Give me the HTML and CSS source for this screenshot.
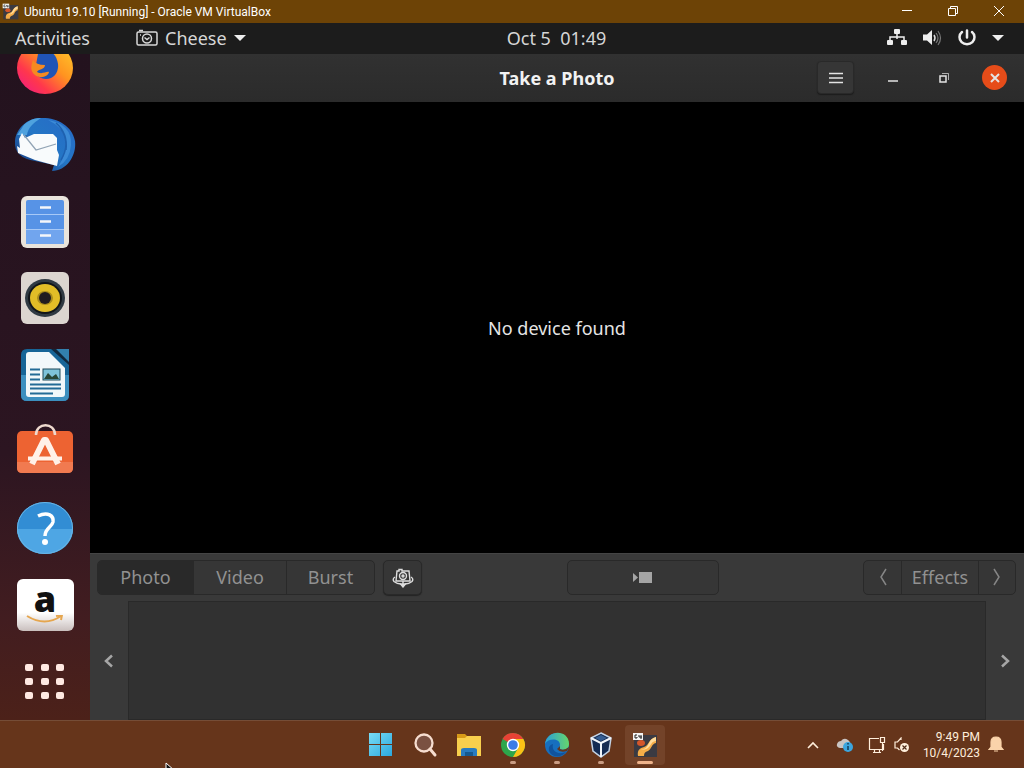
FILE: index.html
```html
<!DOCTYPE html>
<html lang="en">
<head>
<meta charset="utf-8">
<meta name="viewport" content="width=device-width, initial-scale=1">
<title>Ubuntu 19.10 [Running] - Oracle VM VirtualBox</title>
<link rel="stylesheet" href="styles.css">
</head>
<body>
<svg class="defs" aria-hidden="true">
  <defs>
    <symbol id="vm" viewBox="0 0 26 26">
      <rect x="2" y="3" width="23" height="22" fill="#3a3a42"/>
      <path d="M6 24c-1-6 2-8 6-9 5-1 4-8 12-10v6c-5 1-4 6-8 8-3 1-4 2-4 5z" fill="#f5ad48"/>
      <path d="M8 17c5 1 7-2 9-6 2-4 4-5 7-6v4c-4 0-5 4-7 6-3 3-6 3-9 2z" fill="#ffdc9c"/>
      <ellipse cx="9" cy="11" rx="4" ry="3" fill="#d4562a"/>
      <rect x="1" y="1" width="10" height="7" fill="#f4f4f4"/>
      <path d="M5 3H3v3h2V5M7 3v2h3M9 3v4" fill="none" stroke="#222"/>
    </symbol>
  </defs>
</svg>

<div class="desktop">
  <header class="titlebar">
    <svg class="titlebar-icon" viewBox="0 0 26 26" aria-hidden="true"><use href="#vm"/></svg>
    <h1>Ubuntu 19.10 [Running] - Oracle VM VirtualBox</h1>
    <button aria-label="Minimize"><svg width="12" height="12" viewBox="0 0 12 12"><path d="M1 5.500h10"/></svg></button>
    <button aria-label="Restore"><svg width="12" height="12" viewBox="0 0 12 12"><path d="M1.500 3.500h7v7h-7zM3.500 3.500v-2h7v7h-2"/></svg></button>
    <button aria-label="Close"><svg width="12" height="12" viewBox="0 0 12 12"><path d="M1 1l10 10M11 1L1 11"/></svg></button>
  </header>

  <nav class="panel" aria-label="System panel">
    <div class="panel-left">
      <button>Activities</button>
      <button class="app-menu">
        <svg width="22" height="18" viewBox="0 0 22 18" fill="none" stroke="#d8d8d8" stroke-width="1.500"><rect x="1" y="3" width="20" height="13" rx="1.500"/><circle cx="11" cy="9.500" r="4.500"/><path d="M8.500 8.500l2.500 2 2.500-2M3 1.500h4M4 6h1"/></svg>
        <span>Cheese</span>
        <svg width="12" height="7" viewBox="0 0 12 7" fill="#eee"><path d="M0 0h12L6 6z"/></svg>
      </button>
    </div>
    <button class="clock">Oct 5&nbsp; 01:49</button>
    <button class="status" aria-label="System status">
      <svg width="20" height="18" viewBox="0 0 20 18" fill="#eee"><rect x="7" y="0" width="6" height="5" rx="1"/><rect x="0" y="11" width="6" height="5" rx="1"/><rect x="14" y="11" width="6" height="5" rx="1"/><path d="M10 5v3M3 12V8h14v4M10 8v2" fill="none" stroke="#eee" stroke-width="1.500"/></svg>
      <svg width="20" height="18" viewBox="0 0 20 18"><path d="M1 5.500h4L10 1v15l-5-4.500H1z" fill="#eee"/><path d="M12 6q2 3 0 6" fill="none" stroke="#ddd" stroke-width="1.500"/><path d="M14 4q4 5 0 10M16 2q5 7 0 14" fill="none" stroke="#777" stroke-width="1.200"/></svg>
      <svg width="20" height="18" viewBox="0 0 20 18" fill="none" stroke="#eee" stroke-width="2.500" stroke-linecap="round"><path d="M5 3a7.500 7 0 1 0 10 0M10 1.500v7"/></svg>
      <svg width="12" height="7" viewBox="0 0 12 7" fill="#eee"><path d="M0 0h12L6 6z"/></svg>
    </button>
  </nav>

  <main class="workspace">
    <nav class="dock" aria-label="Dock">
      <ul>
        <li><a href="#firefox" aria-label="Firefox"><svg viewBox="0 0 64 64">
          <defs><linearGradient id="ff" x1="0" y1="1" x2="1" y2="0"><stop offset="0" stop-color="#ef168f"/><stop offset=".3" stop-color="#ff374c"/><stop offset=".6" stop-color="#ff9420"/><stop offset="1" stop-color="#ffd02d"/></linearGradient></defs>
          <ellipse cx="32" cy="32" rx="28" ry="26" fill="url(#ff)"/>
          <path d="M25 18q17-8 20 10c1 8-4 15-12 15-6 0-10-4-11-9z" fill="#2054b5"/>
          <path d="M20 24q3 5 12 5c0 5-7 4-8 7 5 3 9-1 12 0-1 5-9 7-14 3-5-4-4-9-2-15z" fill="#f58a21"/></svg></a></li>
        <li><a href="#thunderbird" aria-label="Thunderbird"><svg viewBox="0 0 64 64">
          <defs><linearGradient id="tb" x1="0" y1="1" x2="1" y2="0"><stop offset="0" stop-color="#163375"/><stop offset=".5" stop-color="#2476c5"/><stop offset="1" stop-color="#276ac7"/></linearGradient></defs>
          <path d="M2 28C3 15 15 5 27 5c16-1 32 7 35 23 2 15-9 30-23 30l2-6-19-4C9 46 1 40 2 28z" fill="url(#tb)"/>
          <path d="M4 22l5-7c2-5 10-10 19-10-8 5-13 10-14 17z" fill="#4fa2de"/>
          <path d="M35 7q24 4 23 25-1 15-13 22 9-14 8-27-3-13-18-20z" fill="#3b8ad6"/>
          <path d="M43 10q12 10 10 27M48 16q10 14 0 31" fill="none" stroke="#1e61b0" stroke-width="1.500"/>
          <path d="M9 20l3 5 9-4 19 0 4 4v12l2 5-2 11-22-6-17-7-1-7 3 2-1-9z" fill="#f8fbfc"/>
          <path d="M11 22l12 15 20-6" fill="none" stroke="#91a4b5" stroke-width="1.300"/></svg></a></li>
        <li><a href="#files" aria-label="Files"><svg viewBox="0 0 64 64">
          <rect x="8" y="6" width="48" height="52" rx="6" fill="#e9e4dc"/><rect x="13" y="10" width="38" height="44" rx="2" fill="#5793e6"/><path d="M13 40h38v14H13z" fill="#71a5ee"/><path d="M13 24.500h38M13 39.500h38" stroke="#a7c9f7"/><path d="M27 17.500h11M27 31.500h11M27 45.500h11" stroke="#f4f6fa" stroke-width="2.500"/></svg></a></li>
        <li><a href="#rhythmbox" aria-label="Rhythmbox"><svg viewBox="0 0 64 64">
          <rect x="8" y="6" width="48" height="52" rx="6" fill="#dcd5d0"/><ellipse cx="32" cy="32" rx="20" ry="19" fill="#303a43"/><ellipse cx="32" cy="32" rx="17" ry="16" fill="#11151a"/><ellipse cx="32" cy="32" rx="15" ry="14" fill="#e2bd27"/><ellipse cx="32" cy="32" rx="8" ry="7" fill="#a88b1c"/><ellipse cx="32" cy="32" rx="6" ry="6" fill="#211c20"/></svg></a></li>
        <li><a href="#writer" aria-label="LibreOffice Writer"><svg viewBox="0 0 64 64">
          <path d="M14 6h42v46q0 6-6 6H14q-6 0-6-6V12q0-6 6-6z" fill="#176597"/><path d="M8 32h48v20q0 6-6 6H14q-6 0-6-6z" fill="#3c8fbf"/><path d="M16 9h20l16 16v26q0 3-3 3H16q-3 0-3-3V12q0-3 3-3z" fill="#f2f8fa"/><path d="M43 6h13v14z" fill="#3280ae"/><path d="M38 6l18 16v-3L43 6z" fill="#10283d"/>
          <path d="M17 26.500h10M17 31.500h10M17 36.500h10M17 41.500h31M17 45.500h31M17 50.500h23" stroke="#236b96" stroke-width="2"/><rect x="30" y="26" width="17" height="11" fill="#7ec3da" stroke="#1d4859"/><path d="M31 36l4-6 4 4 4-3 3 5z" fill="#294737"/></svg></a></li>
        <li><a href="#software" aria-label="Ubuntu Software"><svg viewBox="0 0 64 64">
          <rect x="4" y="11" width="56" height="42" rx="5" fill="#ed6332"/><path d="M4 42h56v6q0 5-5 5H9q-5 0-5-5z" fill="#f17a50"/><path d="M23 15c0-13 19-13 19 0" fill="none" stroke="#eed9ce" stroke-width="2.500"/><path d="M19 44l12-24h2l12 24" fill="none" stroke="#fff1e8" stroke-width="6" stroke-linejoin="round"/><path d="M15 38.500h34" stroke="#fff1e8" stroke-width="4"/></svg></a></li>
        <li><a href="#help" aria-label="Help"><svg viewBox="0 0 64 64">
          <ellipse cx="32" cy="32" rx="28" ry="26" fill="#328dd4"/><path d="M4 33h56c0 13-11 25-28 25S4 46 4 33z" fill="#4ea6e4"/><ellipse cx="32" cy="32" rx="27.500" ry="25.500" fill="none" stroke="#69b5e5"/><path d="M25 20c10-5 16 0 15 6-1 5-8 6-8 14" fill="none" stroke="#fff" stroke-width="3.500"/><circle cx="32" cy="46" r="3" fill="#fff"/></svg></a></li>
        <li><a class="amazon" href="#amazon" aria-label="Amazon"><span>a</span><svg class="smile" viewBox="0 0 38 10"><path d="M1 1q18 11 34 0M30 1l6-1-1 5" fill="none" stroke="#e5a64f" stroke-width="2"/></svg></a></li>
        <li><button aria-label="Show applications"><svg viewBox="0 0 64 64" fill="#ffe9e2"><rect x="12" y="14" width="8" height="7" rx="2"/><rect x="28" y="14" width="8" height="7" rx="2"/><rect x="43" y="14" width="8" height="7" rx="2"/><rect x="12" y="28" width="8" height="7" rx="2"/><rect x="28" y="28" width="8" height="7" rx="2"/><rect x="43" y="28" width="8" height="7" rx="2"/><rect x="12" y="42" width="8" height="7" rx="2"/><rect x="28" y="42" width="8" height="7" rx="2"/><rect x="43" y="42" width="8" height="7" rx="2"/></svg></button></li>
      </ul>
    </nav>

    <section class="cheese">
      <header class="headerbar">
        <h2>Take a Photo</h2>
        <div class="window-tools">
          <button class="menu" aria-label="Menu"><svg width="14" height="12" viewBox="0 0 14 12"><path d="M0 1.500h14M0 6h14M0 10.500h14"/></svg></button>
          <button aria-label="Minimize"><svg width="12" height="12" viewBox="0 0 12 12"><path d="M1 9h10"/></svg></button>
          <button aria-label="Restore"><svg width="12" height="12" viewBox="0 0 12 12"><path d="M2 4h6v6H2z"/><path d="M4 1.500h6.500V8" stroke-width="1" opacity=".7"/></svg></button>
          <button class="close" aria-label="Close"><svg width="12" height="12" viewBox="0 0 12 12"><path d="M2 2l8 8M10 2l-8 8" stroke-width="2"/></svg></button>
        </div>
      </header>
      <div class="viewfinder"><p>No device found</p></div>
      <div class="controls">
        <div class="modes">
          <div class="linked">
            <button class="photo active" aria-pressed="true">Photo</button>
            <button class="video">Video</button>
            <button class="burst">Burst</button>
          </div>
          <button class="box switch" aria-label="Switch camera"><svg width="22" height="20" viewBox="0 0 22 20" fill="none" stroke="#ddd" stroke-width="1.400"><path d="M5 3h2V1.500h3V3h7l1 10H4z"/><circle cx="11" cy="8" r="3.500"/><circle cx="11" cy="8" r="1"/><path d="M3 9Q0 11 2 13.500 5 16 9 16M19 9q3 2 1 4.500-3 2.500-7 2.500"/><path d="M11 13v6M8.500 16h5L11 19z" fill="#eee"/></svg></button>
        </div>
        <button class="box capture" aria-label="Take a photo"><svg width="19" height="12" viewBox="0 0 19 12" fill="#a5a5a5"><rect x="6" width="13" height="11"/><path d="M0 1l5 4.500L0 10z"/></svg></button>
        <div class="linked effects">
          <button class="arrow" aria-label="Previous effects"><svg width="8" height="18" viewBox="0 0 8 18"><path d="M7 1L2 9l5 8"/></svg></button>
          <button class="effects-label">Effects</button>
          <button class="arrow" aria-label="Next effects"><svg width="8" height="18" viewBox="0 0 8 18"><path d="M1 1l5 8-5 8"/></svg></button>
        </div>
      </div>
      <div class="gallery">
        <button aria-label="Previous"><svg width="10" height="14" viewBox="0 0 10 14"><path d="M8 1.500L2 7l6 5.500"/></svg></button>
        <div class="thumbs"></div>
        <button aria-label="Next"><svg width="10" height="14" viewBox="0 0 10 14"><path d="M2 1.500L8 7l-6 5.500"/></svg></button>
      </div>
    </section>
  </main>

  <footer class="taskbar">
    <div class="apps">
      <button aria-label="Start"><svg viewBox="0 0 26 26"><defs><linearGradient id="win" x1="0" y1="0" x2="1" y2="1"><stop offset="0" stop-color="#79dcf4"/><stop offset="1" stop-color="#2ba8df"/></linearGradient></defs><path d="M1 1h11v11H1zM13 1h11v11H13zM1 13h11v11H1zM13 13h11v11H13z" fill="url(#win)"/></svg></button>
      <button aria-label="Search"><svg viewBox="0 0 26 26"><circle cx="12" cy="11" r="8.500" fill="#7a5142" stroke="#f6ddcf" stroke-width="2.300"/><path d="M18 17l5 6" stroke="#f6ddcf" stroke-width="3" stroke-linecap="round"/></svg></button>
      <button aria-label="File Explorer"><svg viewBox="0 0 26 26"><path d="M1 2h8l3 3v6H1z" fill="#d79a18"/><path d="M1 6h8l2-2h14v20H1z" fill="#f8cf4d"/><path d="M5 24v-6q0-2 3-2h10q3 0 3 2v6z" fill="#287bc0"/><path d="M9 20h8v4H9z" fill="#15588f"/></svg></button>
      <button class="running" aria-label="Chrome"><svg viewBox="0 0 26 26"><circle cx="13" cy="13" r="12" fill="#2da64b"/><path d="M13 13L2.600 7a12 12 0 0 1 20.800 0z" fill="#e84235"/><path d="M13 7h10.400A12 12 0 0 1 13 25l5.200-9z" fill="#fbc116"/><circle cx="13" cy="13" r="6.200" fill="#fff"/><circle cx="13" cy="13" r="4.800" fill="#3c7ce6"/></svg></button>
      <button class="running" aria-label="Edge"><svg viewBox="0 0 26 26"><defs><linearGradient id="edge"><stop offset="0" stop-color="#2b9fd8"/><stop offset="1" stop-color="#66d66b"/></linearGradient></defs><circle cx="13" cy="13" r="12" fill="#176fbe"/><path d="M1 12C3-3 25-3 25 12c0 5-5 7-9 5-2-1 0-2 0-4 0-7-12-7-15-1z" fill="url(#edge)"/><path d="M9 12c-2 8 6 11 13 8-4 5-11 6-15 2-4-5-2-9 2-10z" fill="#10539d"/><path d="M16 17q4 2 9-2l-2 4q-7 2-10-2l3-3z" fill="#64371d"/></svg></button>
      <button class="running" aria-label="VirtualBox Manager"><svg viewBox="0 0 26 26"><path d="M13 1l10 5-2 13-8 6-8-6L3 6z" fill="#142b52" stroke="#c3d3e5" stroke-width="1.500"/><path d="M3 6l10 5v14M13 11l10-5" fill="none" stroke="#f1f5fa" stroke-width="2"/><path d="M7 6l6-3 6 3-6 3z" fill="#355d92"/></svg></button>
      <button class="running current" aria-label="Ubuntu 19.10"><svg viewBox="0 0 26 26"><use href="#vm"/></svg></button>
    </div>
    <div class="tray">
      <button aria-label="Show hidden icons"><svg width="12" height="8" viewBox="0 0 12 8"><path d="M1 7l5-5 5 5" stroke-width="1.600"/></svg></button>
      <button aria-label="OneDrive"><svg width="18" height="16" viewBox="0 0 18 16"><path d="M4 11q-4-1-3-4 1-3 4-3 3-4 7-1 3 2 3 8z" fill="#c9c4c2" stroke="none"/><circle cx="12" cy="10" r="5" fill="#3ca5dd" stroke="none"/><path d="M12 9v4M12 6v1.500" stroke="#103d5a" stroke-width="1.500"/></svg></button>
      <button aria-label="Network"><svg width="18" height="18" viewBox="0 0 18 18"><path d="M11 2.500H1.500v11h14V8M5 16.500h8M6.500 14v2M11.500 14v2M12.500 1.500h4v5h-4zM14.500 7v8"/></svg></button>
      <button aria-label="Volume muted"><svg width="16" height="16" viewBox="0 0 16 16"><path d="M7 3V1L3.500 5H1v6h2.500l2 2"/><circle cx="10.500" cy="10.500" r="4.500" fill="#fff0dc" stroke="none"/><path d="M8.500 8.500l4 4M12.500 8.500l-4 4" stroke="#4f2c18"/></svg></button>
      <button class="datetime"><time datetime="2023-10-04T21:49">9:49 PM<br>10/4/2023</time></button>
      <button aria-label="Notifications"><svg width="16" height="17" viewBox="0 0 16 17"><path d="M8 1Q3 1 3 6v5l-2 2.500h14L13 11V6q0-5-5-5zM6 15h4" fill="#fad3aa" stroke="#fad3aa"/></svg></button>
    </div>
  </footer>
  <svg class="pointer" viewBox="0 0 10 14" aria-hidden="true"><path d="M1 1v12l4-4h5z" fill="#111" stroke="#fff"/></svg>
</div>
</body>
</html>
```
FILE: styles.css
```css
* { box-sizing: border-box; }
body { margin: 0; background: #000; overflow: hidden; }
h1, h2, p, ul { margin: 0; padding: 0; }
button { margin: 0; padding: 0; border: 0; background: none; color: inherit; font: inherit; }
button, a { cursor: pointer; }
svg { display: block; flex: none; }
.defs { position: absolute; width: 0; height: 0; }

.desktop {
  position: relative;
  height: 100vh;
  display: grid;
  grid-template-rows: auto auto minmax(0, 1fr) auto;
  overflow: hidden;
  font-family: "Noto Sans", sans-serif;
  font-size: 18px;
  line-height: 24px;
}

/* Host window title */
.titlebar { display: flex; align-items: center; height: 23px; padding-left: 2px; background: #6d4306; color: #fff; }
.titlebar-icon { width: 17px; height: 17px; margin-right: 5px; }
.titlebar h1 { flex: 1; font: 400 12px/20px Roboto, sans-serif; }
.titlebar button { width: 46px; height: 20px; display: grid; place-items: center; padding-bottom: 2px; }
.titlebar button:last-child { margin-right: 2px; }
.titlebar button svg { fill: none; stroke: #fff; }

/* Guest top panel */
.panel {
  display: grid;
  grid-template-columns: 1fr auto 1fr;
  align-items: center;
  height: 31px;
  padding: 0 20px 1px 15px;
  background: #1c1c1c;
  color: #d6d6d6;
}
.panel-left, .app-menu, .status { display: flex; align-items: center; }
.panel-left { gap: 46px; }
.app-menu { gap: 7px; }
.clock { margin-left: 94px; }
.status { justify-self: end; gap: 15px; }

.workspace { display: flex; min-height: 0; }

/* Launcher */
.dock { flex: none; width: 90px; overflow: hidden; background: linear-gradient(#23121e, #2c1521 60%, #421d20 85%, #4c2119); }
.dock ul { display: flex; flex-direction: column; height: calc(100% + 24px); margin-top: -24px; list-style: none; }
.dock li { flex: 1; min-height: 0; display: grid; place-items: center; }
.dock li svg { width: 64px; height: 64px; }
.dock .amazon {
  width: 57px;
  height: 52px;
  padding-top: 4px;
  border-radius: 6px;
  background: linear-gradient(#fff 65%, #c9bfbd);
  display: flex;
  flex-direction: column;
  align-items: center;
  color: #111;
  text-decoration: none;
  font: 800 36px/32px "Open Sans", sans-serif;
}
.dock .amazon .smile { width: 38px; height: 10px; }

/* Camera window */
.cheese { flex: 1; min-width: 0; display: flex; flex-direction: column; background: #393939; color: #919191; }
.headerbar {
  display: grid;
  grid-template-columns: 1fr auto 1fr;
  align-items: center;
  height: 48px;
  padding: 0 17px 1px;
  background: linear-gradient(#313131, #2b2b2b);
}
.headerbar h2 { grid-column: 2; color: #f2f2f2; font-size: 18px; line-height: 24px; font-weight: 700; }
.window-tools { justify-self: end; display: flex; align-items: center; gap: 26px; }
.window-tools button { width: 25px; height: 25px; display: grid; place-items: center; }
.window-tools svg { fill: none; stroke: #e4e4e4; stroke-width: 1.5; }
.window-tools .menu { width: 37px; height: 33px; border: 1px solid #292929; border-radius: 4px; background: #363636; box-shadow: 0 1px 1px #1c1c1c; }
.window-tools .close { border-radius: 50%; background: #e64c19; }
.viewfinder { flex: 1; min-height: 0; display: grid; place-items: center; background: #000; color: #e5e5e5; }
.controls {
  display: flex;
  justify-content: space-between;
  padding: 6px 8px 6px 7px;
  border-top: 1px solid #444;
}
.modes { display: flex; gap: 8px; }
.linked { display: flex; height: 35px; border: 1px solid #292929; border-radius: 5px; overflow: hidden; background: #363636; }
.linked button { padding-bottom: 1px; }
.linked button + button { border-left: 1px solid #292929; }
.photo { width: 95px; }
.video { width: 93px; }
.burst { width: 88px; }
.linked .active { background: #292929; }
.box { height: 35px; display: grid; place-items: center; border: 1px solid #292929; border-radius: 5px; background: #363636; }
.switch { width: 39px; box-shadow: 0 1px 1px #242424; }
.capture { width: 152px; }
.arrow { width: 37px; display: grid; place-items: center; }
.arrow svg { fill: none; stroke: #858585; stroke-width: 1.5; }
.effects-label { width: 77px; }
.gallery { display: flex; height: 119px; }
.gallery button { width: 38px; display: grid; place-items: center; }
.gallery svg { fill: none; stroke: #a6a6a6; stroke-width: 2.5; }
.thumbs { flex: 1; background: #313131; border: 1px solid #292929; }

/* Host taskbar */
.taskbar {
  display: grid;
  grid-template-columns: 1fr auto 1fr;
  align-items: center;
  height: 48px;
  padding-right: 20px;
  border-top: 1px solid #754d37;
  background: #66351b;
  color: #ffeedb;
}
.apps { grid-column: 2; display: flex; gap: 4px; margin-left: 22px; }
.apps button { position: relative; width: 40px; height: 40px; display: grid; place-items: center; border-radius: 4px; }
.apps svg { width: 26px; height: 26px; }
.apps .current { background: #734329; }
.apps .running::after { content: ""; position: absolute; left: 17px; bottom: 1px; width: 6px; height: 3px; border-radius: 2px; background: #c99c83; }
.apps .current::after { left: 12px; width: 16px; background: #efb38b; }
.tray { justify-self: end; display: flex; align-items: center; gap: 8px; }
.tray button:first-child { margin-right: 9px; }
.tray button:nth-child(2) { margin-right: 6px; }
.tray svg { fill: none; stroke: #ffeedb; stroke-width: 1.2; }
.datetime { margin-left: 5px; text-align: right; font: 400 12px/16px Roboto, sans-serif; }
.pointer { position: absolute; left: 165px; bottom: -8px; width: 10px; height: 14px; }
```
